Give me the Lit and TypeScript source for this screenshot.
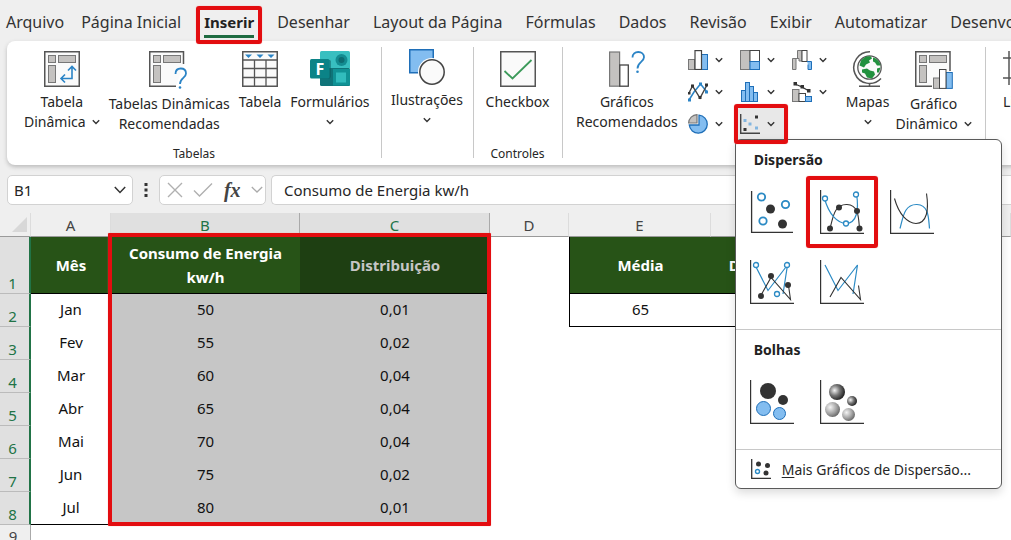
import { LitElement, html, svg, css, nothing } from "lit";
import { customElement, state } from "lit/decorators.js";
import { classMap } from "lit/directives/class-map.js";

const chevron = html`<svg class="chevron" width="8" height="6" viewBox="0 0 8 6" aria-hidden="true">
  <path d="M.8 1.2 4 4.4 7.2 1.2" fill="none" stroke="#333" stroke-width="1.4" />
</svg>`;

const pivotFrame = svg`
  <rect x="4.5" y="4.5" width="7" height="7" fill="#c4c2c0" stroke="#777" />
  <rect x="14.5" y="4.5" width="17" height="7" fill="#c4c2c0" stroke="#777" />
  <rect x="4.5" y="14.5" width="7" height="17" fill="#c4c2c0" stroke="#777" />`;

const pivotTableIcon = html`<svg width="36" height="36" viewBox="0 0 36 36">
  <rect x=".75" y=".75" width="34.5" height="34.5" fill="#fafafa" stroke="#555" stroke-width="1.5" />
  ${pivotFrame}
  <path d="M28 15.5V27.5H17M24 19.5 28 15.5 32 19.5M21 23.5 17 27.5 21 31.5" fill="none" stroke="#2b84c6" stroke-width="1.6" />
</svg>`;

const pivotHelpIcon = html`<svg width="40" height="38" viewBox="0 0 40 38">
  <path d="M34.5 13V.75H.75V35.25H27" fill="#fafafa" stroke="#555" stroke-width="1.5" />
  ${pivotFrame}
  <path d="M26.5 23C26.5 19.5 28.7 17.5 31.7 17.5 35 17.5 37 19.5 37 22.5 37 27 31 27 31 33" fill="none" stroke="#2b84c6" stroke-width="1.8" />
  <circle cx="31" cy="36.5" r="1.3" fill="#2b84c6" />
</svg>`;

const tableIcon = html`<svg width="36" height="36" viewBox="0 0 36 36">
  <rect x=".75" y=".75" width="34.5" height="34.5" fill="#fafafa" stroke="#555" stroke-width="1.5" />
  <path d="M1 9H35M1 17.5H35M1 26.5H35M12.5 9V35M24 9V35" stroke="#555" stroke-width="1.3" />
  <path d="M3 3.5H10L6.5 7ZM14.5 3.5H21.5L18 7ZM25.5 3.5H32.5L29 7Z" fill="#2b84c6" />
</svg>`;

const formsIcon = html`<svg width="40" height="36" viewBox="0 0 40 36">
  <rect x="10" y="0" width="30" height="18" rx="1.5" fill="#38bfc0" />
  <rect x="10" y="17" width="30" height="18" rx="1.5" fill="#0f7479" />
  <rect x="23" y="18" width="17" height="16.5" fill="#109295" />
  <circle cx="31.5" cy="9" r="6" fill="#138c91" /><circle cx="31.5" cy="9" r="3" fill="#0d6c72" />
  <rect x="26" y="21.5" width="10" height="10" fill="#31bcbd" />
  <path d="M10 9H20L21 10V26L19 28H10Z" fill="#0b5a5e" opacity=".5" />
  <rect x="0" y="8" width="19.5" height="19.5" rx="1.5" fill="#0b8387" />
  <text x="9.8" y="23.5" text-anchor="middle" font-family="Open Sans, sans-serif" font-weight="700" font-size="16" fill="#fff">F</text>
</svg>`;

const shapesIcon = html`<svg width="36" height="36" viewBox="0 0 36 36">
  <rect x=".75" y=".75" width="23.5" height="23" fill="#83bdf0" stroke="#1f6fb8" stroke-width="1.5" />
  <circle cx="23" cy="23" r="14" fill="#fff" />
  <circle cx="23" cy="23" r="12.2" fill="#fafafa" stroke="#444" stroke-width="1.5" />
</svg>`;

const checkIcon = html`<svg width="36" height="36" viewBox="0 0 36 36">
  <rect x=".75" y=".75" width="34.5" height="34.5" fill="#fafafa" stroke="#555" stroke-width="1.5" />
  <path d="M4.5 20 12.5 27.5 31.5 9" fill="none" stroke="#3c9a5a" stroke-width="1.8" />
</svg>`;

const chartHelpIcon = html`<svg width="36" height="36" viewBox="0 0 36 36">
  <rect x=".6" y="1" width="10" height="34.2" fill="#c4c2c0" stroke="#777" stroke-width="1.2" />
  <rect x="10.8" y="14" width="8.5" height="21.2" fill="#fff" stroke="#444" stroke-width="1.3" />
  <path d="M23.5 6.5C23.5 3 26 1 29.3 1 32.5 1 35 3 35 6.3 35 11 28.5 11 28.5 17.5" fill="none" stroke="#2b84c6" stroke-width="1.8" />
  <circle cx="28.5" cy="20.8" r="1.3" fill="#2b84c6" />
</svg>`;

const mapIcon = html`<svg width="32" height="36" viewBox="0 0 32 36">
  <circle cx="17.5" cy="16.5" r="11.7" fill="#fafafa" stroke="#555" stroke-width="1.3" />
  <path d="M9 9.500C12 5.500 16 4.500 19 5.500L20 7.500 17 9.500 18 11.500 14 13.500 12 16.500 7.500 14.500ZM21 6.500C25 7.500 28 10.500 28.500 14.500L25 14.500 23 11.500 21 10.500ZM10 18.500 15 17.500 18 19.500 22 20.500 23 23.500 20 27.500 15 26.500 13 22.500 10 21.500ZM25 17.500 28.500 16.500 27 21.500 25 21.500Z" fill="#22913f" />
  <path d="M18 .8A15.800 15.800 0 1 0 29 27.500M17.500 32V35M7 35.200H28" fill="none" stroke="#555" stroke-width="1.5" />
</svg>`;

const pivotChartIcon = html`<svg width="38" height="38" viewBox="0 0 38 38">
  <path d="M35 20V.75H.75V35.25H17" fill="#fafafa" stroke="#555" stroke-width="1.5" />
  ${pivotFrame}
  <rect x="18.5" y="27" width="6" height="10.4" fill="#c4c2c0" stroke="#777" />
  <rect x="31" y="21.5" width="6.3" height="15.9" fill="#83bdf0" stroke="#1f6fb8" />
  <rect x="24.5" y="18.5" width="6.5" height="18.9" fill="#fff" stroke="#444" />
</svg>`;

const lineSparkIcon = html`<svg width="36" height="36" viewBox="0 0 36 36">
  <path d="M0 7H36M0 27H36M6 0V34M18 0V34" fill="none" stroke="#555" stroke-width="1.5" />
</svg>`;

const mini = (body: unknown) => html`<svg width="20" height="20" viewBox="0 0 20 20">${body}</svg>`;

const columnMini = mini(svg`
  <rect x=".5" y="9.5" width="6" height="10" fill="#c4c2c0" stroke="#777" />
  <rect x="13.5" y="4.5" width="6" height="15" fill="#83bdf0" stroke="#1f6fb8" />
  <rect x="7" y=".6" width="6.5" height="18.9" fill="#fff" stroke="#444" stroke-width="1.2" />`);
const treeMini = mini(svg`
  <rect x=".5" y=".5" width="9.5" height="19" fill="#c4c2c0" stroke="#777" />
  <rect x="10" y=".5" width="9.5" height="11" fill="#fff" stroke="#444" />
  <rect x="10" y="11.5" width="9.5" height="8" fill="#83bdf0" stroke="#1f6fb8" />`);
const waterfallMini = mini(svg`
  <path d="M.5 19.5V8.5H5.5V.5H10V11H7V8.5H4V19.5Z" fill="#c4c2c0" stroke="#777" />
  <rect x="10" y=".5" width="5" height="11" fill="#fff" stroke="#444" />
  <path d="M15 11.5H19.5V19.5H16V14.5" fill="#83bdf0" stroke="#1f6fb8" />`);
const lineMini = mini(svg`
  <path d="M1 18 6 10 12.5 2 19 10" fill="none" stroke="#2b84c6" stroke-width="1.5" />
  <path d="M1 11 4.5 4 12 16 19 3" fill="none" stroke="#444" stroke-width="1.4" />
  <g fill="#333"><rect x="3" y="2.5" width="3" height="3" /><rect x="10.5" y="14" width="3" height="3" /><rect x="17" y="1.5" width="3" height="3" /><rect x="0" y="10" width="2.5" height="2.5" /></g>
  <g fill="#2b84c6"><rect x="0" y="16.5" width="3" height="3" /><rect x="11" y="0.5" width="3" height="3" /><rect x="17" y="8.5" width="3" height="3" /></g>`);
const histogramMini = mini(svg`
  <g fill="#83bdf0" stroke="#1f6fb8"><rect x="1.5" y="8.5" width="4" height="11" /><rect x="5.5" y=".5" width="4" height="19" /><rect x="9.5" y="4.5" width="4" height="15" /><rect x="13.5" y="10.5" width="4" height="9" /></g>`);
const comboMini = mini(svg`
  <rect x=".5" y="7.5" width="6.5" height="12" fill="#c4c2c0" stroke="#777" />
  <rect x="7" y="11.5" width="6.5" height="8" fill="#fff" stroke="#444" />
  <rect x="13.5" y="14.5" width="6" height="5" fill="#83bdf0" stroke="#1f6fb8" />
  <path d="M3 2 10 5 17 9" fill="none" stroke="#333" stroke-width="1.3" />
  <g fill="#333"><rect x="1.5" y="0" width="3.5" height="3.5" /><rect x="8.5" y="3" width="3.5" height="3.5" /><rect x="15" y="7" width="3.5" height="3.5" /></g>`);
const pieMini = mini(svg`
  <path d="M11 1.2A9 9 0 1 1 1.3 11H11Z" fill="#83bdf0" stroke="#1f6fb8" stroke-width="1.3" />
  <path d="M9 .6V9H.6A8.8 8.8 0 0 1 9 .6Z" fill="#c4c2c0" stroke="#777" stroke-width="1.2" />`);
const scatterMini = mini(svg`
  <path d="M.7 0V19.3H20" fill="none" stroke="#444" stroke-width="1.4" />
  <g fill="#333"><rect x="15" y="1.5" width="3" height="3" /><rect x="3.5" y="14" width="3" height="3" /></g>
  <g fill="#83b6e0"><rect x="3.5" y="5" width="3" height="3" /><rect x="8.5" y="8.5" width="3" height="3" /><rect x="15" y="12.5" width="3" height="3" /></g>`);

const option = (body: unknown) => html`<svg width="44" height="44" viewBox="0 0 44 44">
  <path d="M.6 0V43.4H44" fill="none" stroke="#333" stroke-width="1.2" />${body}
</svg>`;
const ring = (x: number, y: number, r = 2.5, w = 1.3) =>
  svg`<circle cx=${x} cy=${y} r=${r} fill="#fff" stroke="#2b8ac4" stroke-width=${w} />`;
const dot = (x: number, y: number, r = 3) => svg`<circle cx=${x} cy=${y} r=${r} fill="#333" />`;

const scatterOption = html`<svg width="44" height="44" viewBox="0 0 44 44">
  <path d="M1.6 1V42.4H43" fill="none" stroke="#333" stroke-width="1.3" />
  ${ring(11.5, 7, 3.7, 1.8)}${ring(35.5, 14.5, 3.7, 1.8)}${ring(13, 31, 3.7, 1.8)}
  ${dot(20.5, 19, 4.5)}${dot(32.5, 34, 4.5)}
</svg>`;
const upArc = "M10 38.5C13 28 14 14 27 14.5 39 15 38.5 28 39.5 38.5";
const downArc = "M4.5 8.5C9 25 18 33.5 26 33.5 37 33 39 20 36.5 3.5";
const smoothMarkers = option(svg`
  <path d=${upArc} fill="none" stroke="#333" stroke-width="1.1" />
  <path d=${downArc} fill="none" stroke="#2b8ac4" stroke-width="1.2" />
  ${ring(5, 8.5)}${ring(36, 4.5)}${ring(26, 33.5)}
  ${dot(10, 38.5)}${dot(19, 17.5)}${dot(37, 21)}${dot(39.5, 38.5)}`);
const smoothLines = option(svg`
  <path d=${upArc} fill="none" stroke="#2b8ac4" stroke-width="1.2" />
  <path d=${downArc} fill="none" stroke="#333" stroke-width="1.1" />`);
const zigBlue = "M5 5 18 30.5 37.5 5 33 34";
const zigDark = "M10 37 21 17.5 40.5 39.5 38.5 25.5";
const zig = svg`
  <path d=${zigBlue} fill="none" stroke="#2b8ac4" stroke-width="1.2" />
  <path d=${zigDark} fill="none" stroke="#333" stroke-width="1.1" />`;
const straightMarkers = option(svg`${zig}
  ${ring(6, 5)}${ring(37, 5)}${ring(27, 34)}${dot(11, 36)}${dot(21, 16)}${dot(38, 25)}`);
const straightLines = option(zig);
const bubbles = option(svg`
  <circle cx="18" cy="11" r="8" fill="#333" /><circle cx="33" cy="20" r="5" fill="#333" />
  <circle cx="13.5" cy="28.5" r="7" fill="#83bdf0" stroke="#1f6fb8" /><circle cx="29.5" cy="33.5" r="6" fill="#83bdf0" stroke="#1f6fb8" />`);
const bubbles3d = option(svg`
  <defs>
    <radialGradient id="dark" cx=".35" cy=".4" r=".65"><stop offset="0" stop-color="#f4f4f4" /><stop offset=".5" stop-color="#777" /><stop offset="1" stop-color="#222" /></radialGradient>
    <radialGradient id="light" cx=".35" cy=".35" r=".7"><stop offset="0" stop-color="#f4f4f4" /><stop offset=".6" stop-color="#a4a4a4" /><stop offset="1" stop-color="#666" /></radialGradient>
  </defs>
  <circle cx="17" cy="12" r="8" fill="url(#dark)" /><circle cx="32" cy="21" r="5" fill="url(#dark)" />
  <circle cx="12.5" cy="29.5" r="7.5" fill="url(#light)" /><circle cx="28.5" cy="34.5" r="6.5" fill="url(#light)" />`);
const moreIcon = mini(svg`
  <path d="M.7 0V19.3H20" fill="none" stroke="#333" stroke-width="1.3" />
  ${dot(7.5, 5, 2.5)}${dot(16.5, 6.5, 2.5)}${dot(15, 14, 2.5)}${ring(6.5, 12.5, 2, 1.4)}`);

interface Command { icon: unknown; lines: string[]; arrow?: "inline" | "below" }
interface MiniChart { name: string; icon: unknown; open?: boolean }

const tabs = ["Arquivo", "Página Inicial", "Inserir", "Desenhar", "Layout da Página", "Fórmulas", "Dados", "Revisão", "Exibir", "Automatizar", "Desenvolvedor"];

const miniCharts: MiniChart[] = [
  { name: "Colunas", icon: columnMini },
  { name: "Hierarquia", icon: treeMini },
  { name: "Cascata", icon: waterfallMini },
  { name: "Linhas", icon: lineMini },
  { name: "Estatística", icon: histogramMini },
  { name: "Combinação", icon: comboMini },
  { name: "Pizza", icon: pieMini },
  { name: "Dispersão", icon: scatterMini, open: true },
];

const scatterOptions = [
  { name: "Dispersão", icon: scatterOption },
  { name: "Linhas suaves e marcadores", icon: smoothMarkers, marked: true },
  { name: "Linhas suaves", icon: smoothLines },
  { name: "Linhas retas e marcadores", icon: straightMarkers },
  { name: "Linhas retas", icon: straightLines },
];
const bubbleOptions = [
  { name: "Bolhas", icon: bubbles },
  { name: "Bolhas 3D", icon: bubbles3d },
];

const rows = [
  ["Jan", "50", "0,01"],
  ["Fev", "55", "0,02"],
  ["Mar", "60", "0,04"],
  ["Abr", "65", "0,04"],
  ["Mai", "70", "0,04"],
  ["Jun", "75", "0,02"],
  ["Jul", "80", "0,01"],
];

@customElement("app-root")
export class AppRoot extends LitElement {
  @state() private activeTab = "Inserir";

  static styles = css`
    :host {
      display: flex;
      flex-direction: column;
      height: 100vh;
      overflow: hidden;
      background: #efefef;
      color: #262626;
      font-family: "Noto Sans", "Open Sans", sans-serif;
      font-size: 14px;
    }
    * { box-sizing: border-box; }
    button {
      margin: 0;
      padding: 0;
      border: 0;
      background: none;
      color: inherit;
      font: inherit;
    }
    svg { display: block; flex: none; }
    .mark {
      position: absolute;
      border: 4px solid #e30d10;
      border-radius: 3px;
      box-shadow: 0 0 1px #f08080;
      pointer-events: none;
      z-index: 5;
    }

    .tabs { display: flex; flex: none; height: 41px; padding-left: 6px; gap: 23px; }
    .tab { position: relative; height: 41px; padding-top: 2px; font-size: 16px; white-space: nowrap; color: #333; }
    .tab:first-child { margin-right: -6px; }
    .tab.active { font-size: 15px; font-weight: 700; color: #222; }
    .tab.active::after { content: ""; position: absolute; left: 0; right: 0; top: 35px; height: 3px; background: #1e6b41; }
    .tab .mark { inset: 6px -8px -3px; }

    .ribbon {
      display: flex;
      flex: none;
      position: relative;
      z-index: 2;
      height: 124px;
      margin: 0 -16px 0 7px;
      border-radius: 8px;
      background: #fff;
      box-shadow: 0 2px 4px #bbb;
    }
    .group { display: flex; flex-direction: column; flex: none; position: relative; padding-bottom: 3px; }
    .group + .group::before { content: ""; position: absolute; left: 0; top: 6px; bottom: 7px; width: 1px; background: #c8c8c8; }
    .group.tables { width: 374px; }
    .group.art { width: 92px; }
    .group.controls { width: 89px; }
    .group.charts { width: 423px; }
    .commands { display: flex; flex: 1; justify-content: center; gap: 9px; }
    .tables .commands { justify-content: flex-start; padding-left: 17px; }
    .charts .commands { justify-content: flex-start; padding-left: 14px; gap: 6px; }
    .lines .commands { padding-left: 18px; }
    .command { display: flex; flex-direction: column; align-items: center; gap: 5px; height: 100px; padding-top: 10px; line-height: 20px; white-space: nowrap; }
    .art .command { padding-top: 8px; }
    .line { display: flex; align-items: center; gap: 6px; height: 20px; }
    .command .text { display: flex; flex-direction: column; align-items: center; }
    .group-name { font-size: 12px; line-height: 16px; text-align: center; }

    .minis { display: grid; grid-template-columns: repeat(3, 52px); grid-auto-rows: 32px; padding-top: 3px; height: 99px; }
    .mini { position: relative; }
    .mini > button { display: flex; align-items: center; gap: 7px; width: 100%; height: 100%; padding-left: 4px; }
    .mini.open > button { background: #e8e8e8; }
    .mini > .mark { inset: -4px 0 -4px -2px; }

    .menu {
      position: absolute;
      left: -1px;
      top: 31px;
      width: 267px;
      border: 1px solid #5a5a5a;
      border-radius: 6px;
      background: #fff;
      box-shadow: 0 4px 10px rgba(0, 0, 0, 0.14);
      z-index: 4;
    }
    .section { padding: 10px 1px 12px; border-bottom: 1px solid #c8c8c8; }
    .section h2 { margin: 0 0 7px; padding-left: 17px; font-size: 14px; line-height: 20px; font-weight: 700; color: #222; }
    .options { display: grid; grid-template-columns: repeat(3, 70px); grid-auto-rows: 70px; }
    .option { display: grid; place-items: center; position: relative; }
    .option .mark { inset: -1px; }
    .more { display: flex; align-items: center; gap: 11px; width: 100%; height: 38px; padding-left: 15px; font-size: 14px; }
    .more u { text-underline-offset: 2px; }

    .formula-bar { display: flex; flex: none; height: 30px; margin: 10px 0 8px; padding-left: 7px; }
    .field { display: flex; align-items: center; border: 1px solid #d2d2d2; border-radius: 5px; background: #fff; }
    .field input { flex: 1; min-width: 0; border: 0; outline: 0; padding: 0; background: none; color: inherit; font: inherit; font-size: 15px; }
    .name-box { width: 126px; padding: 0 6px; }
    .dots { display: grid; place-items: center; width: 26px; }
    .tools { width: 107px; padding-left: 7px; justify-content: space-between; padding-right: 2px; margin-right: 5px; }
    .fx { font-family: "Liberation Serif", serif; font-style: italic; font-weight: 700; font-size: 20px; line-height: 24px; color: #444; }
    .formula { flex: 1; padding-left: 12px; border-right: 0; border-radius: 5px 0 0 5px; }

    .sheet { position: relative; flex: 1; min-height: 0; overflow: hidden; background: #fff; }
    table { width: 100%; table-layout: fixed; border-collapse: separate; border-spacing: 0; font-size: 15px; color: #111; }
    th, td { padding: 0; text-align: center; }
    td { height: 33px; padding-bottom: 3px; }
    .c-row { width: 31px; } .c-a { width: 80px; } .c-b { width: 189px; } .c-c { width: 190px; } .c-d { width: 79px; } .c-e { width: 142px; }
    .letters th { height: 24px; background: #efefef; border-right: 1px solid #dcdcdc; border-bottom: 1px solid #9a9a9a; font-weight: 400; color: #444; line-height: 20px; }
    .letters .picked { background: #e0e0e0; border-right-color: #aaa; color: #217346; }
    .corner svg { margin-left: 12px; }
    .number { border-right: 1px solid #aaa; border-bottom: 1px solid #bbb; background: #efefef; font-weight: 400; color: #444; vertical-align: bottom; line-height: 20px; padding-right: 4px; }
    .number.picked { border-right: 2px solid #217346; background: #e0e0e0; color: #217346; }
    .titles th { height: 57px; }
    .title { background: #275317; color: #fff; font-size: 15px; line-height: 24px; border-bottom: 1px solid #000; }
    .title.shaded { background: #1e3f12; color: #c6c6c6; }
    .area { background: #c6c6c6; }
    .last { border-bottom: 1px solid #000; }
    .edge { border-left: 1px solid #000; }
    .boxed { border-bottom: 1px solid #000; }
    .next td { height: 22px; }
    .selection { left: 108px; top: 20px; width: 383px; height: 293px; border-radius: 1px; }
  `;

  private command(c: Command) {
    return html`<button class="command" type="button">
      ${c.icon}
      <span class="text">
        ${c.lines.map((text, i) => html`<span class="line">${text}${c.arrow === "inline" && i === c.lines.length - 1 ? chevron : nothing}</span>`)}
        ${c.arrow === "below" ? html`<span class="line">${chevron}</span>` : nothing}
      </span>
    </button>`;
  }

  private options(list: { name: string; icon: unknown; marked?: boolean }[]) {
    return html`<div class="options">
      ${list.map((o) => html`<button class="option" type="button" aria-label=${o.name}>${o.icon}${o.marked ? html`<span class="mark"></span>` : nothing}</button>`)}
    </div>`;
  }

  private menu() {
    return html`<div class="menu">
      <section class="section"><h2>Dispersão</h2>${this.options(scatterOptions)}</section>
      <section class="section"><h2>Bolhas</h2>${this.options(bubbleOptions)}</section>
      <button class="more" type="button">${moreIcon}<span><u>M</u>ais Gráficos de Dispersão...</span></button>
    </div>`;
  }

  private ribbon() {
    return html`<div class="ribbon">
      <div class="group tables">
        <div class="commands">
          ${this.command({ icon: pivotTableIcon, lines: ["Tabela", "Dinâmica"], arrow: "inline" })}
          ${this.command({ icon: pivotHelpIcon, lines: ["Tabelas Dinâmicas", "Recomendadas"] })}
          ${this.command({ icon: tableIcon, lines: ["Tabela"] })}
          ${this.command({ icon: formsIcon, lines: ["Formulários"], arrow: "below" })}
        </div>
        <div class="group-name">Tabelas</div>
      </div>
      <div class="group art">
        <div class="commands">${this.command({ icon: shapesIcon, lines: ["Ilustrações"], arrow: "below" })}</div>
      </div>
      <div class="group controls">
        <div class="commands">${this.command({ icon: checkIcon, lines: ["Checkbox"] })}</div>
        <div class="group-name">Controles</div>
      </div>
      <div class="group charts">
        <div class="commands">
          ${this.command({ icon: chartHelpIcon, lines: ["Gráficos", "Recomendados"] })}
          <div class="minis">
            ${miniCharts.map((m) => html`<div class=${classMap({ mini: true, open: !!m.open })}>
              <button type="button" aria-label=${m.name}>${m.icon}${chevron}</button>
              ${m.open ? html`${this.menu()}<span class="mark"></span>` : nothing}
            </div>`)}
          </div>
          ${this.command({ icon: mapIcon, lines: ["Mapas"], arrow: "below" })}
          ${this.command({ icon: pivotChartIcon, lines: ["Gráfico", "Dinâmico"], arrow: "inline" })}
        </div>
      </div>
      <div class="group lines">
        <div class="commands">${this.command({ icon: lineSparkIcon, lines: ["Linha"] })}</div>
      </div>
    </div>`;
  }

  private formulaBar() {
    return html`<div class="formula-bar">
      <div class="field name-box">
        <input aria-label="Caixa de nome" .value=${"B1"} />
        <button type="button" aria-label="Abrir lista de nomes">
          <svg width="12" height="8" viewBox="0 0 12 8"><path d="M.8 1 6 6.5 11.2 1" fill="none" stroke="#333" stroke-width="1.5" /></svg>
        </button>
      </div>
      <div class="dots"><svg width="4" height="14" viewBox="0 0 4 14" fill="#333"><rect x=".5" y="0" width="3" height="3" /><rect x=".5" y="5.5" width="3" height="3" /><rect x=".5" y="11" width="3" height="3" /></svg></div>
      <div class="field tools">
        <button type="button" aria-label="Cancelar"><svg width="16" height="16" viewBox="0 0 16 16"><path d="M1 1 15 15M15 1 1 15" stroke="#b0b0b0" stroke-width="1.4" /></svg></button>
        <button type="button" aria-label="Inserir"><svg width="20" height="16" viewBox="0 0 20 16"><path d="M1 8.5 6.5 14 19 1.5" fill="none" stroke="#b0b0b0" stroke-width="1.4" /></svg></button>
        <button class="fx" type="button" aria-label="Inserir função">fx</button>
        <svg width="12" height="8" viewBox="0 0 12 8"><path d="M.8 1 6 6 11.2 1" fill="none" stroke="#aaa" stroke-width="1.3" /></svg>
      </div>
      <div class="field formula"><input aria-label="Barra de fórmulas" .value=${"Consumo de Energia kw/h"} /></div>
    </div>`;
  }

  private sheet() {
    return html`<div class="sheet">
      <table>
        <colgroup><col class="c-row" /><col class="c-a" /><col class="c-b" /><col class="c-c" /><col class="c-d" /><col class="c-e" /><col class="c-e" /><col /></colgroup>
        <thead>
          <tr class="letters">
            <th class="corner"><svg width="15" height="15" viewBox="0 0 15 15"><path d="M15 0V15H0Z" fill="#d8d8d8" /></svg></th>
            ${["A", "B", "C", "D", "E", "F", "G"].map((l) => html`<th scope="col" class=${classMap({ picked: l === "B" || l === "C" })}>${l}</th>`)}
          </tr>
        </thead>
        <tbody>
          <tr class="titles">
            <th class="number picked" scope="row">1</th>
            <th class="title">Mês</th>
            <th class="title">Consumo de Energia<br />kw/h</th>
            <th class="title shaded">Distribuição</th>
            <td></td>
            <th class="title edge">Média</th>
            <th class="title">Desvio Padrão</th>
            <td></td>
          </tr>
          ${rows.map((r, i) => {
            const last = i === rows.length - 1;
            return html`<tr>
              <th class="number picked" scope="row">${i + 2}</th>
              <td class=${classMap({ last })}>${r[0]}</td>
              <td class=${classMap({ area: true, last })}>${r[1]}</td>
              <td class=${classMap({ area: true, last })}>${r[2]}</td>
              <td></td>
              ${i === 0 ? html`<td class="edge boxed">65</td><td class="boxed"></td>` : html`<td></td><td></td>`}
              <td></td>
            </tr>`;
          })}
          <tr class="next"><th class="number" scope="row">9</th><td colspan="7"></td></tr>
        </tbody>
      </table>
      <div class="mark selection"></div>
    </div>`;
  }

  render() {
    return html`
      <nav class="tabs">
        ${tabs.map((t) => html`<button type="button" class=${classMap({ tab: true, active: t === this.activeTab })} @click=${() => (this.activeTab = t)}>${t}${t === "Inserir" ? html`<span class="mark"></span>` : nothing}</button>`)}
      </nav>
      ${this.ribbon()} ${this.formulaBar()} ${this.sheet()}
    `;
  }
}
